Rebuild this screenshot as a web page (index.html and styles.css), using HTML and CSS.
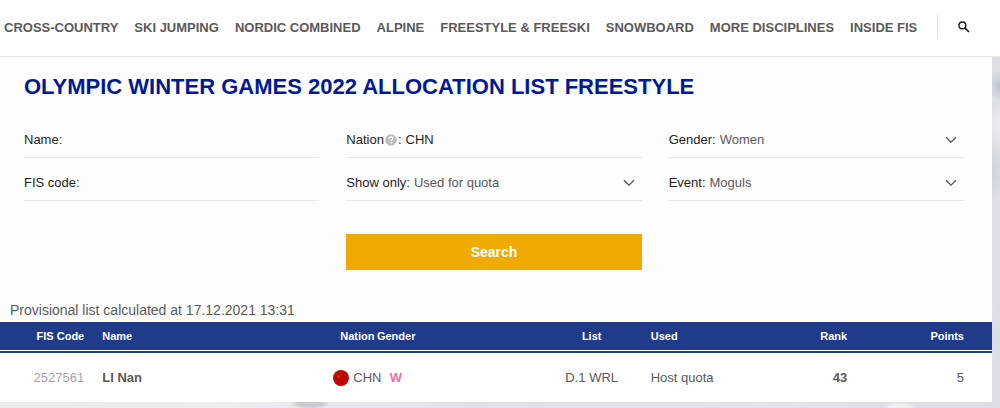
FILE: index.html
```html
<!DOCTYPE html>
<html lang="en">
<head>
    <meta charset="UTF-8">
    <meta name="viewport" content="width=device-width, initial-scale=1.0">
    <title>Allocation List Freestyle</title>
    <link rel="stylesheet" href="styles.css">
</head>
<body>
    <header class="header">
        <nav class="nav">
            <a href="#">CROSS-COUNTRY</a>
            <a href="#">SKI JUMPING</a>
            <a href="#">NORDIC COMBINED</a>
            <a href="#">ALPINE</a>
            <a href="#">FREESTYLE &amp; FREESKI</a>
            <a href="#">SNOWBOARD</a>
            <a href="#">MORE DISCIPLINES</a>
            <a href="#">INSIDE FIS</a>
        </nav>
        <button class="search-toggle" type="button" aria-label="Search site">
            <svg width="12" height="12" viewBox="0 0 12 12" fill="none" stroke="#1a1a1a">
                <circle cx="4.4" cy="4.4" r="3.4" stroke-width="1.4"/>
                <path d="M6.9 6.9L11 11" stroke-width="1.7"/>
            </svg>
        </button>
    </header>

    <main class="panel">
        <h1 class="title">OLYMPIC WINTER GAMES 2022 ALLOCATION LIST FREESTYLE</h1>

        <form class="filters">
            <div class="field">
                <label for="name">Name:</label>
                <input type="text" id="name">
            </div>
            <div class="field">
                <label for="nation">Nation<svg class="help" width="12" height="12" viewBox="0 0 12 12">
                    <circle cx="6" cy="6" r="5.8" fill="#bdbdbd"/>
                    <path d="M4.1 4.7C4.1 2.3 7.9 2.4 7.9 4.6C7.9 5.9 6.1 5.8 6.1 7.2M6.1 8.2V9.5" fill="none" stroke="#fff" stroke-width="1.3"/>
                </svg>:</label>
                <input type="text" id="nation" value="CHN">
            </div>
            <div class="field">
                <label for="gender">Gender:</label>
                <select id="gender">
                    <option>Women</option>
                    <option>Men</option>
                </select>
                <svg class="chevron" width="12" height="8" viewBox="0 0 12 8"><path d="M1 1.2L6 6.2L11 1.2"/></svg>
            </div>
            <div class="field">
                <label for="code">FIS code:</label>
                <input type="text" id="code">
            </div>
            <div class="field">
                <label for="show">Show only:</label>
                <select id="show">
                    <option>Used for quota</option>
                    <option>All</option>
                </select>
                <svg class="chevron" width="12" height="8" viewBox="0 0 12 8"><path d="M1 1.2L6 6.2L11 1.2"/></svg>
            </div>
            <div class="field">
                <label for="event">Event:</label>
                <select id="event">
                    <option>Moguls</option>
                    <option>Aerials</option>
                </select>
                <svg class="chevron" width="12" height="8" viewBox="0 0 12 8"><path d="M1 1.2L6 6.2L11 1.2"/></svg>
            </div>
            <button class="submit" type="submit">Search</button>
        </form>

        <p class="note">Provisional list calculated at 17.12.2021 13:31</p>

        <table class="results">
            <thead>
                <tr>
                    <th class="code">FIS Code</th>
                    <th class="name">Name</th>
                    <th class="nation">Nation</th>
                    <th class="gender">Gender</th>
                    <th class="list">List</th>
                    <th class="used">Used</th>
                    <th class="rank">Rank</th>
                    <th class="points">Points</th>
                </tr>
            </thead>
            <tbody>
                <tr>
                    <td class="code">2527561</td>
                    <td class="name">LI Nan</td>
                    <td class="nation">
                        <span class="country">
                            <svg width="16" height="16" viewBox="0 0 16 16">
                                <circle cx="8" cy="8" r="8" fill="#bd0a02"/>
                                <path d="M3.5 6l1.2-.2.5-1.1.5 1.1 1.1.1-.8.8.2 1.1-1-.6-1 .6.2-1.1z" fill="#d04008"/>
                                <path d="M6.3 3.2h1M7.4 4.6h.8M7.2 7h.8" stroke="#c8480c"/>
                            </svg>CHN
                        </span>
                    </td>
                    <td class="gender">W</td>
                    <td class="list">D.1 WRL</td>
                    <td class="used">Host quota</td>
                    <td class="rank">43</td>
                    <td class="points">5</td>
                </tr>
            </tbody>
        </table>
    </main>
</body>
</html>
```
FILE: styles.css
```css
* {
    box-sizing: border-box;
}

body {
    margin: 0;
    min-height: 100vh;
    font-family: "Liberation Sans", Arial, sans-serif;
    font-size: 13px;
    color: #5a5a5a;
    /* snowy slope */
    background:
        radial-gradient(ellipse 20px 5px at 31% 99%, #c9cbce 60%, transparent),
        radial-gradient(ellipse 16px 6px at 90% 100%, #eef0f1 60%, transparent),
        radial-gradient(ellipse 14px 16px at 100% 21%, #bfc6d1, transparent),
        radial-gradient(ellipse 16px 24px at 100% 31%, #eceef1, transparent),
        radial-gradient(ellipse 14px 30px at 99% 42%, #ccd2db, transparent),
        linear-gradient(100deg, #e6e8ea, #eceef0 28%, #dfe3e8 50%, #e1e4e8 80%, #dbdfe5);
}

.header {
    display: flex;
    align-items: center;
    height: 57px;
    padding: 0 4px 2px;
    background: #fff;
    border-bottom: 1px solid #e9e9e9;
}

.nav {
    display: flex;
    gap: 16px;
}

.nav a {
    color: #5a5a5a;
    font-weight: bold;
    text-decoration: none;
    white-space: nowrap;
}

.search-toggle {
    display: flex;
    align-items: center;
    height: 24px;
    margin-left: 20px;
    padding: 0 0 0 20px;
    background: none;
    border: 0;
    border-left: 1px solid #e2e2e2;
}

.panel {
    margin-right: 8px;
    background: #fdfdfd;
}

.title {
    margin: 0;
    padding: 16px 24px 0;
    font-size: 22px;
    line-height: 28px;
    color: #001a96;
}

.filters {
    display: grid;
    grid-template-columns: repeat(3, 1fr);
    gap: 8px 27px;
    padding: 22px 28px 30px 24px;
}

.field {
    display: flex;
    align-items: center;
    height: 35px;
    border-bottom: 1px solid #e9e9e9;
}

.field label {
    padding-bottom: 2px;
    color: #1f1f1f;
    white-space: nowrap;
}

.field input,
.field select {
    flex: 1;
    min-width: 0;
    padding: 0 0 2px 4px;
    font: inherit;
    color: #1f1f1f;
    background: none;
    border: 0;
    outline: 0;
    appearance: none;
}

.field select {
    color: #5a5a5a;
}

.help {
    margin: 0 1px;
    vertical-align: -2px;
}

.chevron {
    margin-right: 7px;
    fill: none;
    stroke: #555;
    stroke-width: 1.3;
}

.submit {
    grid-column: 2;
    height: 36px;
    margin-top: 25px;
    font: bold 14px "Liberation Sans", Arial, sans-serif;
    color: #fff;
    background: #f0ab00;
    border: 0;
}

.note {
    margin: 0;
    padding: 0 10px 2px;
    font-size: 14px;
    line-height: 20px;
}

.results {
    width: 100%;
    table-layout: fixed;
    border-spacing: 0;
    background: #fff;
    white-space: nowrap;
}

.results th {
    height: 29px;
    padding: 0;
    font-size: 11px;
    text-align: left;
    color: #fff;
    background: #203b8a;
    border-bottom: 1px solid #fff;
}

.results td {
    height: 51px;
    padding: 0;
    border-top: 2px solid #203b8a;
}

.results .code {
    width: 9.4%;
    padding-right: 9px;
    text-align: right;
}

.results .name {
    width: 24.2%;
    padding-left: 9px;
}

.results .nation {
    width: 4.4%;
}

.results th.nation {
    padding-left: 7px;
}

.results .gender {
    width: 3.8%;
    text-align: center;
}

.results .list {
    width: 23.8%;
    padding-left: 118px;
    text-align: center;
}

.results .used {
    width: 13%;
}

.results .rank {
    width: 6.8%;
    text-align: right;
}

.results .points {
    width: 14.6%;
    padding-right: 28px;
    text-align: right;
}

td.code {
    color: #a5a5a5;
}

td.name,
td.rank,
td.gender {
    font-weight: bold;
}

td.gender {
    color: #ee6fab;
}

.country {
    display: flex;
    align-items: center;
    gap: 4px;
}

.country svg {
    flex: none;
}
```
